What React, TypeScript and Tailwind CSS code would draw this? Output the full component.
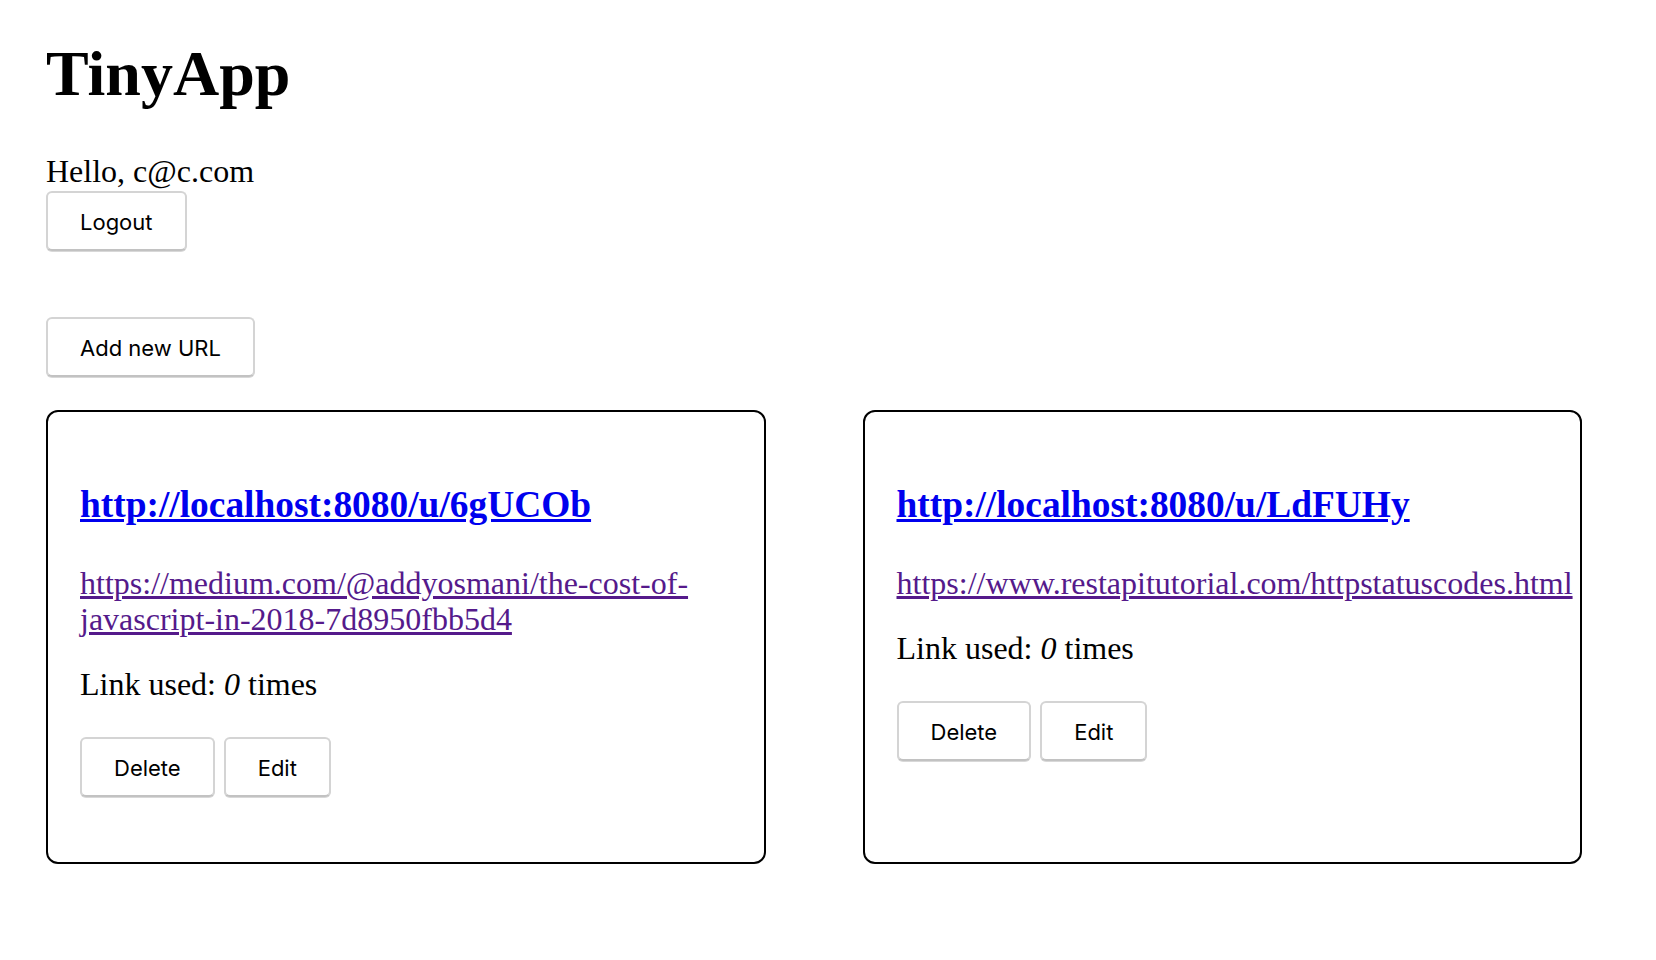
import React from "react";

const serif = { fontFamily: '"Liberation Serif", "Times New Roman", serif' };

function Btn({ children }: { children: React.ReactNode }) {
  return (
    <button
      className="h-[60px] px-[32px] pt-[2px] border-2 border-[#d4d4d4] border-b-[#c2c2c2] rounded-[6px] bg-white text-black text-[22px] leading-none font-['Inter',sans-serif] flex items-center justify-center shadow-[0_1px_0_#d8d8d8]"
    >
      {children}
    </button>
  );
}

function Card({ short, long }: { short: string; long: string }) {
  return (
    <div className="border-2 border-black rounded-[12px] px-[32px] pt-[32px] pb-[65px] bg-white">
      <h3 className="mt-[39px] text-[37.4px] leading-[43px] font-bold">
        <a href="#" className="text-[#0000ee] underline">
          {short}
        </a>
      </h3>
      <p className="mt-[39px] text-[32px] leading-[36px]">
        <a href="#" className="text-[#551a8b] underline">
          {long}
        </a>
      </p>
      <p className="mt-[29px] text-[32px] leading-[36px]">
        Link used: <em>0</em> times
      </p>
      <div className="mt-[35px] flex gap-[9px]">
        <Btn>Delete</Btn>
        <Btn>Edit</Btn>
      </div>
    </div>
  );
}

export default function App() {
  return (
    <div className="min-h-[960px] w-full bg-white text-black pl-[46px]" style={serif}>
      <h1 className="pt-[38px] text-[64px] leading-[72px] font-bold">TinyApp</h1>
      <div className="mt-[43px] text-[32px] leading-[36px]">Hello, c@c.com</div>
      <div className="mt-[2px] flex">
        <Btn>Logout</Btn>
      </div>
      <div className="mt-[66px] flex">
        <Btn>Add new URL</Btn>
      </div>
      <div className="mt-[33px] grid grid-cols-2 gap-[97px] w-[1536px] items-stretch">
        <Card
          short="http://localhost:8080/u/6gUCOb"
          long="https://medium.com/@addyosmani/the-cost-of-javascript-in-2018-7d8950fbb5d4"
        />
        <Card
          short="http://localhost:8080/u/LdFUHy"
          long="https://www.restapitutorial.com/httpstatuscodes.html"
        />
      </div>
    </div>
  );
}
